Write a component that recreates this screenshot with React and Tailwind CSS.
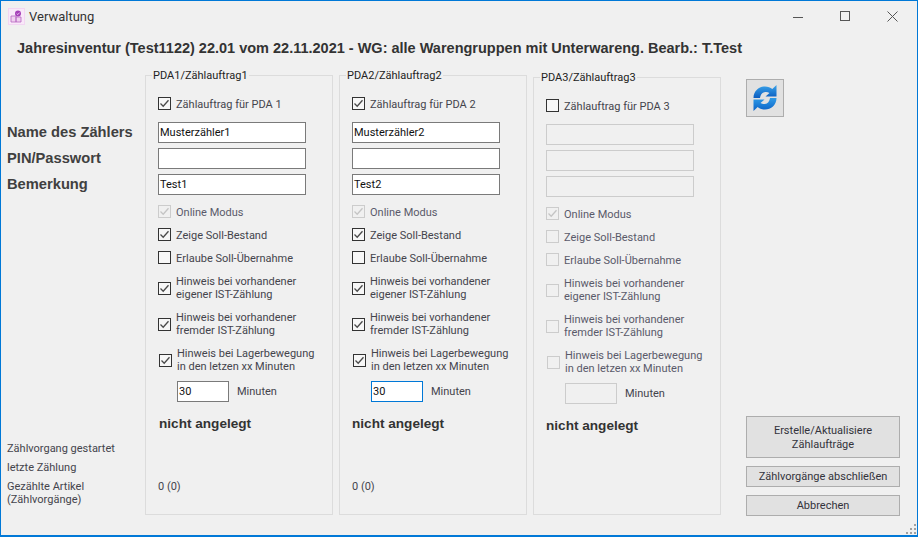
const Box = ({ on, dim, className = "" }) => (
  <span className={`inline-flex items-center justify-center w-[13px] h-[13px] shrink-0 border ${dim ? "border-[#cccccc] bg-[#f0f0f0]" : "border-[#333333] bg-[#f7f7f7]"} ${className}`}>
    {on && (
      <svg width="11" height="11" viewBox="0 0 11 11" fill="none">
        <path d="M1.5 5.5 L4.2 8.2 L9.5 2.2" stroke={dim ? "#c4c4c4" : "#4a4a4a"} strokeWidth="1.3" />
      </svg>
    )}
  </span>
);

const Check = ({ on, dim, offset, label, two, className = "" }) => (
  <div className={`flex items-center ${two ? "h-[26px]" : "h-[13px]"} ${offset ? "ml-px" : ""} ${className}`}>
    <Box on={on} dim={dim} />
    <span className={`ml-[5px] leading-[13px] whitespace-pre-line ${two ? "" : "pt-[2px]"} ${dim ? "text-[#5a5a6a]" : "text-[#44444c]"}`}>{label}</span>
  </div>
);

const Field = ({ value, dim, className = "" }) => (
  <div className={`w-[148px] h-[21px] border flex items-center px-px pt-px text-[#111111] ${dim ? "border-[#cccccc] bg-[#f0f0f0]" : "border-[#7a7a7a] bg-white"} ${className}`}>
    {value}
  </div>
);

const Group = ({ n, checkLabel, name2, note, on, dim, focus, count, shifted, zeige, first }) => (
  <section className={`relative w-[188px] border border-[#dcdcdc] pl-[12px] ${shifted ? "mt-[2px] h-[438px]" : "h-[440px]"}`}>
    <span className="absolute left-[6px] -top-[7px] bg-[#f0f0f0] px-px leading-[13px] text-[#222222]">{`PDA${n}/Zählauftrag${n}`}</span>
    <Check on={on} label={checkLabel} className="mt-[21px]" />
    <Field value={name2} dim={dim} className="mt-[12px]" />
    <Field dim={dim} className="mt-[5px]" />
    <Field value={note} dim={dim} className="mt-[5px]" />
    <Check on dim label="Online Modus" className="mt-[10px]" />
    <Check on={zeige} dim={dim} label="Zeige Soll-Bestand" className="mt-[10px]" />
    <Check dim={dim} label="Erlaube Soll-Übernahme" className="mt-[10px]" />
    <Check two on={zeige} dim={dim} label={"Hinweis bei vorhandener\neigener IST-Zählung"} className="mt-[11px]" />
    <Check two on={zeige} dim={dim} label={"Hinweis bei vorhandener\nfremder IST-Zählung"} className="mt-[10px]" />
    <Check two offset on={zeige} dim={dim} label={"Hinweis bei Lagerbewegung\nin den letzen xx Minuten"} className="mt-[10px]" />
    <div className="flex items-center mt-[8px] ml-[19px]">
      <div className={`w-[52px] h-[21px] border flex items-center px-px pt-px text-[#111111] ${dim ? "border-[#cccccc] bg-[#f0f0f0]" : focus ? "border-[#0078d7] bg-white" : "border-[#7a7a7a] bg-white"}`}>
        {dim ? "" : "30"}
      </div>
      <span className="ml-[8px] pt-[2px] text-[#44444c]">Minuten</span>
    </div>
    <div className={`mt-[14px] h-[16px] leading-[16px] font-['Liberation_Sans'] font-bold text-[13.6px] text-[#333333] ${first ? "ml-px" : ""}`}>nicht angelegt</div>
    {count && <div className="mt-[48px] h-[14px] leading-[14px] text-[#44444c]">0 (0)</div>}
  </section>
);

const Sync = () => (
  <svg width="24" height="26" viewBox="0 0 24 26">
    <defs>
      <linearGradient id="syncA" x1="0" y1="0" x2="0" y2="1">
        <stop offset="0" stopColor="#3aa4ea" />
        <stop offset="1" stopColor="#0a5cc0" />
      </linearGradient>
      <linearGradient id="syncB" x1="0" y1="0" x2="0" y2="1">
        <stop offset="0" stopColor="#2f9ce8" />
        <stop offset="1" stopColor="#0c62c6" />
      </linearGradient>
    </defs>
    <path fill="url(#syncA)" d="M0.5 13 C0.5 6 6 1.5 12 1.5 C15 1.5 17.5 2.5 19.3 4 L23.5 0 V11.5 H12.5 L16.5 8 C15.2 7.2 13.8 6.8 12.2 7 C9.2 7.3 7.5 9.5 7 13 Z" />
    <path fill="url(#syncB)" d="M23.5 13 C23.5 20 18 24.5 12 24.5 C9 24.5 6.5 23.5 4.7 22 L0.5 26 V14.5 H11.5 L7.5 18 C8.8 18.8 10.2 19.2 11.8 19 C14.8 18.7 16.5 16.5 17 13 Z" />
  </svg>
);

const AppIcon = () => (
  <svg width="17" height="17" viewBox="0 0 17 17">
    <rect x="0.5" y="0.5" width="16" height="16" fill="#f9e8f9" stroke="#f2d6f2" />
    <path d="M3 8 h5 v6 h-5 z M8 9 h5 v5 h-5 z" fill="#efd0ef" stroke="#b665c0" strokeWidth="0.8" />
    <circle cx="10" cy="5.5" r="3" fill="#a53fb8" />
    <path d="M8.7 5.6 L9.8 6.6 L11.6 4.6" fill="none" stroke="#f6e0f6" strokeWidth="0.8" />
  </svg>
);

const Btn = ({ children, className = "" }) => (
  <div className={`w-[154px] flex items-center justify-center text-center pt-px leading-[14px] bg-[#e1e1e1] border border-[#adadad] text-[#33333b] ${className}`}>
    {children}
  </div>
);

export default function App() {
  return (
    <div className="relative w-[918px] h-[537px] overflow-hidden flex flex-col bg-[#f0f0f0] border border-[#0078d7] border-b-2 font-['Roboto',sans-serif] text-[11px]">
      <header className="h-[31px] flex items-center pl-[7px] shrink-0">
        <AppIcon />
        <span className="ml-[4px] text-[13px] text-[#333333]">Verwaltung</span>
        <div className="ml-auto flex items-center">
          <svg width="12" height="12" viewBox="0 0 12 12" className="mr-[36px]"><path d="M1 6.5 H11" stroke="#555" /></svg>
          <svg width="11" height="11" viewBox="0 0 11 11" className="mr-[36px]"><rect x="0.5" y="0.5" width="9" height="9" fill="none" stroke="#555" /></svg>
          <svg width="11" height="11" viewBox="0 0 11 11" className="mr-[19px]"><path d="M0.5 0.5 L10.5 10.5 M10.5 0.5 L0.5 10.5" stroke="#555" /></svg>
        </div>
      </header>
      <h1 className="h-[18px] mt-[7px] pl-[16px] leading-[18px] font-['Liberation_Sans'] font-bold text-[14.5px] text-[#333333] shrink-0 whitespace-nowrap">
        Jahresinventur (Test1122) 22.01 vom 22.11.2021 - WG: alle Warengruppen mit Unterwareng. Bearb.: T.Test
      </h1>
      <main className="flex mt-[18px] relative">
        <div className="w-[144px] shrink-0 pl-[6px] text-[#44444c]">
          <div className="mt-[44px] font-['Liberation_Sans'] font-bold text-[14.7px] text-[#404040]">
            <div className="h-[26px] leading-[26px]">Name des Zählers</div>
            <div className="h-[26px] leading-[26px]">PIN/Passwort</div>
            <div className="h-[26px] leading-[26px]">Bemerkung</div>
          </div>
          <div className="mt-[245px] leading-[14px]">Zählvorgang gestartet</div>
          <div className="mt-[5px] leading-[14px]">letzte Zählung</div>
          <div className="mt-[5px] leading-[13px]">Gezählte Artikel<br />(Zählvorgänge)</div>
        </div>
        <div className="flex gap-[6px] items-start">
          <Group n={1} first on zeige checkLabel="Zählauftrag für PDA 1" name2="Musterzähler1" note="Test1" count />
          <Group n={2} on zeige focus checkLabel="Zählauftrag für PDA 2" name2="Musterzähler2" note="Test2" count />
          <Group n={3} dim shifted checkLabel="Zählauftrag für PDA 3" />
        </div>
        <div className="ml-[25px] mt-[4px] h-[437px] flex flex-col">
          <div className="w-[38px] h-[38px] flex items-center justify-center bg-[#e1e1e1] border border-[#adadad]"><Sync /></div>
          <Btn className="mt-auto h-[42px]">Erstelle/Aktualisiere<br />Zählaufträge</Btn>
          <Btn className="mt-[8px] h-[21px]">Zählvorgänge abschließen</Btn>
          <Btn className="mt-[8px] h-[21px]">Abbrechen</Btn>
        </div>
      </main>
      <svg width="12" height="12" viewBox="0 0 12 12" className="absolute right-0 bottom-0">
        <path d="M9 1h2v2H9z M9 5h2v2H9z M5 5h2v2H5z M9 9h2v2H9z M5 9h2v2H5z M1 9h2v2H1z" fill="#a0a0a0" />
      </svg>
    </div>
  );
}
